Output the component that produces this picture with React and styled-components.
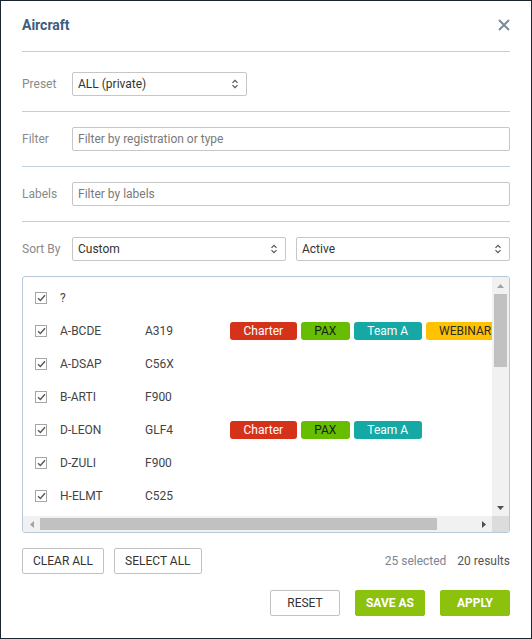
import React from 'react';
import styled, { createGlobalStyle, css } from 'styled-components';

const GlobalStyle = createGlobalStyle`
  html, body { margin: 0; padding: 0; background: #fff; }
  body { font-family: Roboto, "Liberation Sans", Arial, sans-serif; }
  *, *::before, *::after { box-sizing: border-box; }
`;

const svgUri = (svg) => `url("data:image/svg+xml,${encodeURIComponent(svg)}")`;

const chevrons = svgUri(
  '<svg xmlns="http://www.w3.org/2000/svg" width="8" height="12" viewBox="0 0 8 12"><path d="M1.5 4.8L4 2.3l2.5 2.5M1.5 7.2L4 9.7l2.5-2.5" fill="none" stroke="#555" stroke-width="1.2"/></svg>'
);

const Dialog = styled.div`
  width: 532px;
  height: 639px;
  border: 1px solid #1c2430;
  padding: 0 21px;
  display: flex;
  flex-direction: column;
  background: #fff;
`;

const Header = styled.header`
  height: 51px;
  display: flex;
  align-items: center;
  justify-content: space-between;
  border-bottom: 1px solid #c3cfdc;
  padding-bottom: 2px;
`;

const Title = styled.h2`
  margin: 0;
  font-size: 14px;
  font-weight: 700;
  color: #3e5a7e;
`;

const CloseButton = styled.button`
  width: 12px;
  height: 12px;
  padding: 0;
  border: 0;
  background: transparent;
  display: flex;
  cursor: pointer;
`;

const Form = styled.div`
  padding-top: 5px;
  display: flex;
  flex-direction: column;
`;

const FieldRow = styled.div`
  display: flex;
  align-items: center;
  gap: 10px;
  padding: 15px 0;
  border-bottom: ${(p) => (p.$plain ? 'none' : '1px solid #c3cfdc')};
`;

const FieldLabel = styled.label`
  width: 40px;
  flex: none;
  font-size: 12px;
  color: #8a8a8a;
  white-space: nowrap;
`;

const controlBase = css`
  height: 24px;
  border: 1px solid #c6c6c6;
  border-radius: 2px;
  background-color: #fff;
  font-family: Roboto, "Liberation Sans", Arial, sans-serif;
  font-size: 12px;
  color: #333;
  padding: 0 5px;
  outline: none;
`;

const Select = styled.select`
  ${controlBase};
  appearance: none;
  -webkit-appearance: none;
  padding-right: 20px;
  background-image: ${chevrons};
  background-repeat: no-repeat;
  background-position: right 7px center;
  flex: ${(p) => (p.$width ? 'none' : '1 1 0')};
  width: ${(p) => (p.$width ? `${p.$width}px` : 'auto')};
  min-width: 0;
`;

const TextInput = styled.input`
  ${controlBase};
  flex: 1 1 0;
  min-width: 0;
  &::placeholder { color: #7a7a7a; }
`;

/* List panel: viewport plus classic scrollbars laid out on a 2x2 grid */
const ListBox = styled.div`
  height: 257px;
  border: 1px solid #b7c8da;
  border-radius: 3px;
  display: grid;
  grid-template-columns: minmax(0, 1fr) 17px;
  grid-template-rows: minmax(0, 1fr) 16px;
  overflow: hidden;
`;

const Viewport = styled.div`
  overflow: hidden;
`;

const ScrollTrack = styled.div`
  background: #f1f1f1;
  display: flex;
  flex-direction: ${(p) => (p.$horizontal ? 'row' : 'column')};
  align-items: stretch;
`;

const ScrollButton = styled.div`
  flex: none;
  width: 17px;
  height: ${(p) => (p.$horizontal ? '16px' : '17px')};
  display: flex;
  align-items: center;
  justify-content: center;
`;

const Thumb = styled.div`
  flex: none;
  background: #c1c1c1;
  margin: ${(p) => (p.$horizontal ? '2px 0' : '0 2px')};
`;

const Corner = styled.div`
  background: #dcdcdc;
`;

const Rows = styled.div`
  width: max-content;
  min-width: 100%;
  padding: 4px 0 1px;
`;

const Row = styled.div`
  display: flex;
  align-items: center;
  height: 33px;
  padding: 0 32px 0 12px;
  font-size: 12px;
  color: #444;
  white-space: nowrap;
`;

const CheckBox = styled.span`
  width: 12px;
  height: 12px;
  flex: none;
  margin-right: 13px;
  border: 1px solid #a6a6a6;
  display: flex;
  align-items: center;
  justify-content: center;
  background: #fff;
`;

const Cell = styled.span`
  width: 85px;
  flex: none;
`;

const Badges = styled.div`
  display: flex;
  gap: 4px;
`;

const tones = {
  Charter: { bg: '#d5321a', fg: '#fff' },
  PAX: { bg: '#67bd00', fg: '#1b1b1b' },
  'Team A': { bg: '#16a8a4', fg: '#fff' },
  WEBINAR: { bg: '#ffc200', fg: '#2b2b2b' },
};

const Badge = styled.span`
  height: 18px;
  line-height: 18px;
  padding: 0 13.5px;
  border-radius: 3px;
  font-size: 12px;
  background: ${(p) => tones[p.$tone].bg};
  color: ${(p) => tones[p.$tone].fg};
`;

const ActionBar = styled.div`
  display: flex;
  align-items: center;
  gap: 10px;
  margin-top: 15px;
  justify-content: ${(p) => (p.$end ? 'flex-end' : 'flex-start')};
  ${(p) => p.$end && css`gap: 15px; margin-top: 16px;`}
`;

const Button = styled.button`
  height: 26px;
  min-width: 70px;
  padding: 0 10px;
  border: 1px solid ${(p) => (p.$primary ? '#8cc10e' : '#c2c2c2')};
  border-radius: 2px;
  background: ${(p) => (p.$primary ? '#8cc10e' : '#fff')};
  color: ${(p) => (p.$primary ? '#fff' : '#333')};
  font-family: Roboto, "Liberation Sans", Arial, sans-serif;
  font-size: 12px;
  font-weight: ${(p) => (p.$primary ? 700 : 400)};
  text-transform: uppercase;
  white-space: nowrap;
  cursor: pointer;
`;

const Summary = styled.div`
  margin-left: auto;
  display: flex;
  gap: 11px;
  font-size: 12px;
  color: #555;
`;

const Muted = styled.span`
  color: #7c8594;
`;

const aircraft = [
  { reg: '?', type: '', labels: [] },
  { reg: 'A-BCDE', type: 'A319', labels: ['Charter', 'PAX', 'Team A', 'WEBINAR'] },
  { reg: 'A-DSAP', type: 'C56X', labels: [] },
  { reg: 'B-ARTI', type: 'F900', labels: [] },
  { reg: 'D-LEON', type: 'GLF4', labels: ['Charter', 'PAX', 'Team A'] },
  { reg: 'D-ZULI', type: 'F900', labels: [] },
  { reg: 'H-ELMT', type: 'C525', labels: [] },
];

const CheckMark = () => (
  <svg width="9" height="8" viewBox="0 0 9 8">
    <path d="M1 4.2L3.4 6.5L8 1.3" fill="none" stroke="#5c5c5c" strokeWidth="1.5" />
  </svg>
);

const CloseIcon = () => (
  <svg width="12" height="12" viewBox="0 0 12 12">
    <path d="M1 1L11 11M11 1L1 11" stroke="#7d8a9a" strokeWidth="2" />
  </svg>
);

const Arrow = ({ dir, color }) => {
  const pts = {
    up: '0,4 3.5,0 7,4',
    down: '0,0 3.5,4 7,0',
    left: '4,0 0,3.5 4,7',
    right: '0,0 4,3.5 0,7',
  }[dir];
  const vertical = dir === 'up' || dir === 'down';
  return (
    <svg width={vertical ? 7 : 4} height={vertical ? 4 : 7} viewBox={vertical ? '0 0 7 4' : '0 0 4 7'}>
      <polygon points={pts} fill={color} />
    </svg>
  );
};

export default function App() {
  return (
    <>
      <GlobalStyle />
      <Dialog>
        <Header>
          <Title>Aircraft</Title>
          <CloseButton aria-label="Close">
            <CloseIcon />
          </CloseButton>
        </Header>
        <Form>
          <FieldRow>
            <FieldLabel>Preset</FieldLabel>
            <Select $width={175} defaultValue="all">
              <option value="all">ALL (private)</option>
            </Select>
          </FieldRow>
          <FieldRow>
            <FieldLabel>Filter</FieldLabel>
            <TextInput placeholder="Filter by registration or type" />
          </FieldRow>
          <FieldRow>
            <FieldLabel>Labels</FieldLabel>
            <TextInput placeholder="Filter by labels" />
          </FieldRow>
          <FieldRow $plain>
            <FieldLabel>Sort By</FieldLabel>
            <Select defaultValue="custom">
              <option value="custom">Custom</option>
            </Select>
            <Select defaultValue="active">
              <option value="active">Active</option>
            </Select>
          </FieldRow>
        </Form>
        <ListBox>
          <Viewport>
            <Rows>
              {aircraft.map((a) => (
                <Row key={a.reg}>
                  <CheckBox>
                    <CheckMark />
                  </CheckBox>
                  <Cell>{a.reg}</Cell>
                  <Cell>{a.type}</Cell>
                  <Badges>
                    {a.labels.map((l) => (
                      <Badge key={l} $tone={l}>{l}</Badge>
                    ))}
                  </Badges>
                </Row>
              ))}
            </Rows>
          </Viewport>
          <ScrollTrack>
            <ScrollButton>
              <Arrow dir="up" color="#a3a3a3" />
            </ScrollButton>
            <Thumb style={{ height: 73 }} />
            <div style={{ flex: 1 }} />
            <ScrollButton>
              <Arrow dir="down" color="#505050" />
            </ScrollButton>
          </ScrollTrack>
          <ScrollTrack $horizontal>
            <ScrollButton $horizontal>
              <Arrow dir="left" color="#a3a3a3" />
            </ScrollButton>
            <Thumb $horizontal style={{ width: 397 }} />
            <div style={{ flex: 1 }} />
            <ScrollButton $horizontal>
              <Arrow dir="right" color="#505050" />
            </ScrollButton>
          </ScrollTrack>
          <Corner />
        </ListBox>
        <ActionBar>
          <Button>Clear all</Button>
          <Button>Select all</Button>
          <Summary>
            <Muted>25 selected</Muted>
            <span>20 results</span>
          </Summary>
        </ActionBar>
        <ActionBar $end>
          <Button>Reset</Button>
          <Button $primary>Save as</Button>
          <Button $primary>Apply</Button>
        </ActionBar>
      </Dialog>
    </>
  );
}
